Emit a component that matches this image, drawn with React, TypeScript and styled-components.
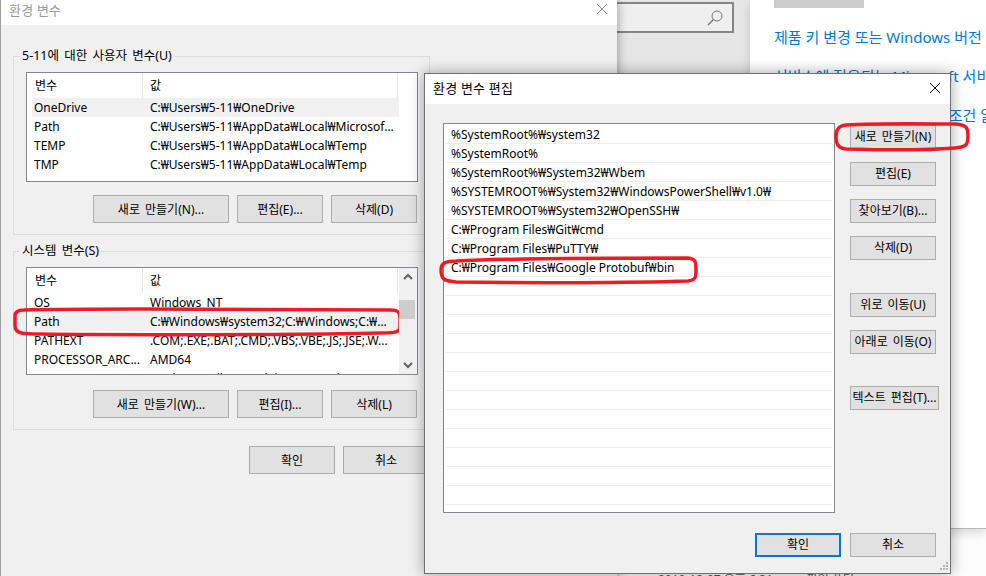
import styled, { createGlobalStyle } from "styled-components";

const GlobalStyle = createGlobalStyle`
  html, body {
    margin: 0;
    background: #fff;
    overflow: hidden;
  }
  * { box-sizing: border-box; }
`;

const fontStack = `"Noto Sans", "Noto Sans CJK KR", sans-serif`;

const Desktop = styled.div`
  position: relative;
  width: 986px;
  height: 576px;
  overflow: hidden;
  font-family: ${fontStack};
  font-size: 12px;
  color: #000;
  background: #fdfdfd;
`;

const SearchPane = styled.div`
  position: absolute;
  left: 560px;
  top: 0;
  width: 190px;
  height: 529px;
  background: #e6e6e6;
  padding-top: 2px;
`;

const SearchBox = styled.div`
  display: flex;
  align-items: center;
  justify-content: flex-end;
  width: 174px;
  height: 31px;
  padding-right: 8px;
  background: #efefef;
  border: 2px solid #858585;
`;

const SettingsPage = styled.div`
  position: absolute;
  left: 750px;
  top: 0;
  width: 236px;
  height: 529px;
  padding-left: 24px;
  background: #fff;
  border-bottom: 1px solid #b8b8b8;
  box-shadow: 0 4px 10px rgba(0, 0, 0, 0.14);
`;

const PagePlaceholder = styled.div`
  width: 90px;
  height: 8px;
  background: #cccccc;
`;

const PageLink = styled.div`
  margin-top: 19px;
  white-space: nowrap;
  font-size: 15px;
  line-height: 20px;
  color: #0078d7;
  & + & { margin-top: 19px; }
`;

const ExplorerRow = styled.div`
  position: absolute;
  left: 658px;
  top: 572px;
  display: flex;
  gap: 34px;
  font-size: 12px;
  line-height: 16px;
  color: #555;
  white-space: nowrap;
`;

const BackWindow = styled.div`
  position: absolute;
  left: 0;
  top: 0;
  width: 617px;
  height: 590px;
  display: flex;
  flex-direction: column;
  background: #f0f0f0;
  border-left: 1px solid #a0a0a0;
  box-shadow: 0 0 10px rgba(0, 0, 0, 0.4);
`;

const FrontWindow = styled.div`
  position: absolute;
  left: 424px;
  top: 73px;
  width: 527px;
  height: 501px;
  display: flex;
  flex-direction: column;
  background: #f0f0f0;
  border: 1px solid #707070;
  box-shadow: 0 0 14px rgba(0, 0, 0, 0.35);
`;

const TitleBar = styled.div<{ $height: number; $inactive?: boolean }>`
  flex: none;
  display: flex;
  align-items: center;
  justify-content: space-between;
  height: ${(p) => p.$height}px;
  padding: 0 9px ${(p) => (p.$inactive ? 7 : 2)}px 8px;
  background: #fff;
  font-size: 13px;
  letter-spacing: 0.2px;
  color: ${(p) => (p.$inactive ? "#9a9a9a" : "#000")};
`;

const TitleText = styled.span`
  padding-bottom: 2px;
`;

const BackContent = styled.div`
  width: 417px;
  margin-left: 12px;
  padding-top: 23px;
`;

const Group = styled.fieldset`
  margin: 0 0 8px;
  padding: 8px 11px 11px 12px;
  border: 1px solid #dcdcdc;
  min-width: 0;
`;

const GroupTitle = styled.legend`
  padding: 0 2px;
  margin-left: -6px;
  line-height: 16px;
  height: 16px;
  font-size: 12.5px;
  word-spacing: 2px;
`;

const VarList = styled.div<{ $height: number }>`
  position: relative;
  height: ${(p) => p.$height}px;
  padding: 0 0 0 5px;
  background: #fff;
  border: 1px solid #828790;
  overflow: hidden;
`;

const VarHeader = styled.div`
  position: relative;
  z-index: 1;
  display: flex;
  width: 366px;
  height: 25px;
  background: #fff;
`;

const HeaderCell = styled.div<{ $width: number; $inset: number }>`
  width: ${(p) => p.$width}px;
  padding-left: ${(p) => p.$inset}px;
  line-height: 26px;
  border-right: 1px solid #e5e5e5;
`;

const VarRow = styled.div<{ $selected?: boolean }>`
  display: flex;
  width: 367px;
  height: 19px;
  padding-left: 2px;
  line-height: 20px;
  white-space: nowrap;
  background: ${(p) => (p.$selected ? "#f0f0f0" : "#fff")};
`;

const VarName = styled.div`
  flex: none;
  width: 116px;
  overflow: hidden;
`;

const ButtonRow = styled.div<{ $top: number }>`
  display: flex;
  justify-content: flex-end;
  gap: 8px;
  margin: ${(p) => p.$top}px 1px 0 0;
`;

const Button = styled.button<{ $width?: number; $tall?: boolean; $default?: boolean }>`
  flex: none;
  width: ${(p) => p.$width ?? 86}px;
  height: ${(p) => (p.$tall ? 28 : 24)}px;
  padding: 0 0 ${(p) => (p.$tall ? 0 : 2)}px;
  background: #e1e1e1;
  border: ${(p) => (p.$default ? "2px solid #0078d7" : "1px solid #adadad")};
  border-radius: 0;
  font-family: ${fontStack};
  font-size: 12px;
  word-spacing: 2px;
  color: #000;
  white-space: nowrap;
`;

const BackFooter = styled.div`
  display: flex;
  gap: 8px;
  margin: 16px 0 0 236px;
`;

const Scrollbar = styled.div`
  position: absolute;
  right: 1px;
  top: 0;
  bottom: 0;
  width: 17px;
  display: flex;
  flex-direction: column;
  justify-content: space-between;
  align-items: center;
  padding: 5px 0;
  background: #f0f0f0;
  z-index: 2;
`;

const ScrollThumb = styled.div`
  position: absolute;
  left: 0;
  top: 32px;
  width: 16px;
  height: 19px;
  background: #cdcdcd;
`;

const FrontBody = styled.div`
  flex: 1;
  display: flex;
  flex-direction: column;
  padding: 19px 14px 0 18px;
`;

const EditArea = styled.div`
  display: flex;
  gap: 15px;
`;

const PathList = styled.div`
  flex: none;
  width: 392px;
  height: 390px;
  padding: 1px 1px 0 1px;
  background: #fff;
  border: 1px solid #828790;
  overflow: hidden;
`;

const PathRow = styled.div`
  height: 19px;
  margin-right: 1px;
  padding-left: 6px;
  line-height: 19px;
  border-bottom: 1px solid #eeeeee;
  white-space: nowrap;
`;

const SideButtons = styled.div`
  display: flex;
  flex-direction: column;
  padding-top: 2px;
`;

const SideGroup = styled.div<{ $gap: number }>`
  display: flex;
  flex-direction: column;
  gap: 13px;
  margin-bottom: ${(p) => p.$gap}px;
`;

const FrontFooter = styled.div`
  display: flex;
  justify-content: flex-end;
  gap: 9px;
  margin-top: 20px;
`;

const ResizeGrip = styled.svg`
  position: absolute;
  right: 0;
  bottom: 0;
`;

const Annotations = styled.svg`
  position: absolute;
  left: 0;
  top: 0;
  pointer-events: none;
`;

const CloseIcon = ({ color }: { color: string }) => (
  <svg width="12" height="12" viewBox="0 0 12 12">
    <path d="M1 1 L11 11 M11 1 L1 11" stroke={color} strokeWidth="1" fill="none" />
  </svg>
);

const Chevron = ({ down }: { down?: boolean }) => (
  <svg width="10" height="7" viewBox="0 0 10 7">
    <path d={down ? "M1 1 L5 5 L9 1" : "M1 6 L5 2 L9 6"} stroke="#606060" strokeWidth="2" fill="none" />
  </svg>
);

const userVars = [
  ["OneDrive", "C:₩Users₩5-11₩OneDrive"],
  ["Path", "C:₩Users₩5-11₩AppData₩Local₩Microsof..."],
  ["TEMP", "C:₩Users₩5-11₩AppData₩Local₩Temp"],
  ["TMP", "C:₩Users₩5-11₩AppData₩Local₩Temp"],
];

const systemVars = [
  ["OS", "Windows_NT"],
  ["Path", "C:₩Windows₩system32;C:₩Windows;C:₩..."],
  ["PATHEXT", ".COM;.EXE;.BAT;.CMD;.VBS;.VBE;.JS;.JSE;.W..."],
  ["PROCESSOR_ARC...", "AMD64"],
  ["PROCESSOR_IDE...", "Intel64 Family 6 Model 158 Stepping 9"],
];

const paths = [
  "%SystemRoot%₩system32",
  "%SystemRoot%",
  "%SystemRoot%₩System32₩Wbem",
  "%SYSTEMROOT%₩System32₩WindowsPowerShell₩v1.0₩",
  "%SYSTEMROOT%₩System32₩OpenSSH₩",
  "C:₩Program Files₩Git₩cmd",
  "C:₩Program Files₩PuTTY₩",
  "C:₩Program Files₩Google Protobuf₩bin",
  ...Array(12).fill(""),
];

const VarTable = ({ rows, height, selected, scroll }: { rows: string[][]; height: number; selected: string; scroll?: boolean }) => (
  <VarList $height={height}>
    <VarHeader>
      <HeaderCell $width={111} $inset={3}>변수</HeaderCell>
      <HeaderCell $width={255} $inset={7}>값</HeaderCell>
    </VarHeader>
    {rows.map(([name, value]) => (
      <VarRow key={name} $selected={name === selected}>
        <VarName>{name}</VarName>
        {value}
      </VarRow>
    ))}
    {scroll && (
      <Scrollbar>
        <Chevron />
        <ScrollThumb />
        <Chevron down />
      </Scrollbar>
    )}
  </VarList>
);

export default function App() {
  return (
    <Desktop>
      <GlobalStyle />
      <ExplorerRow>
        <span>2019-12-07 오후 6:21</span>
        <span>파일 폴더</span>
      </ExplorerRow>
      <SearchPane>
        <SearchBox>
          <svg width="18" height="18" viewBox="0 0 18 18">
            <circle cx="11" cy="7" r="5" stroke="#777" strokeWidth="1" fill="none" />
            <path d="M7.5 10.5 L2 16" stroke="#777" strokeWidth="1.4" fill="none" />
          </svg>
        </SearchBox>
      </SearchPane>
      <SettingsPage>
        <PagePlaceholder />
        <PageLink>제품 키 변경 또는 Windows 버전 업그레이드</PageLink>
        <PageLink>서비스에 적용되는 Microsoft 서비스 계약 읽기</PageLink>
        <PageLink>Microsoft 소프트웨어 사용 조건 읽기</PageLink>
      </SettingsPage>

      <BackWindow>
        <TitleBar $height={25} $inactive>
          환경 변수
          <CloseIcon color="#8a8a8a" />
        </TitleBar>
        <BackContent>
          <Group>
            <GroupTitle>5-11에 대한 사용자 변수(U)</GroupTitle>
            <VarTable rows={userVars} height={110} selected="OneDrive" />
            <ButtonRow $top={13}>
              <Button $tall $width={136}>새로 만들기(N)...</Button>
              <Button $tall>편집(E)...</Button>
              <Button $tall>삭제(D)</Button>
            </ButtonRow>
          </Group>
          <Group>
            <GroupTitle>시스템 변수(S)</GroupTitle>
            <VarTable rows={systemVars} height={108} selected="Path" scroll />
            <ButtonRow $top={15}>
              <Button $tall $width={136}>새로 만들기(W)...</Button>
              <Button $tall>편집(I)...</Button>
              <Button $tall>삭제(L)</Button>
            </ButtonRow>
          </Group>
          <BackFooter>
            <Button $tall>확인</Button>
            <Button $tall>취소</Button>
          </BackFooter>
        </BackContent>
      </BackWindow>

      <FrontWindow>
        <TitleBar $height={30}>
          <TitleText>환경 변수 편집</TitleText>
          <CloseIcon color="#000" />
        </TitleBar>
        <FrontBody>
          <EditArea>
            <PathList>
              {paths.map((path, i) => (
                <PathRow key={i}>{path}</PathRow>
              ))}
            </PathList>
            <SideButtons>
              <SideGroup $gap={33}>
                <Button>새로 만들기(N)</Button>
                <Button>편집(E)</Button>
                <Button>찾아보기(B)...</Button>
                <Button>삭제(D)</Button>
              </SideGroup>
              <SideGroup $gap={32}>
                <Button>위로 이동(U)</Button>
                <Button>아래로 이동(O)</Button>
              </SideGroup>
              <Button $width={89}>텍스트 편집(T)...</Button>
            </SideButtons>
          </EditArea>
          <FrontFooter>
            <Button $default>확인</Button>
            <Button>취소</Button>
          </FrontFooter>
        </FrontBody>
        <ResizeGrip width="12" height="12" viewBox="0 0 12 12" fill="#b4b4b4">
          <rect x="8" y="1" width="2" height="2" />
          <rect x="5" y="4" width="2" height="2" />
          <rect x="8" y="4" width="2" height="2" />
          <rect x="2" y="7" width="2" height="2" />
          <rect x="5" y="7" width="2" height="2" />
          <rect x="8" y="7" width="2" height="2" />
        </ResizeGrip>
      </FrontWindow>

      <Annotations width="986" height="576" viewBox="0 0 986 576" fill="none" stroke="#ed1c24" strokeWidth="3.5" strokeLinejoin="round">
        <path d="M24 310 C60 309 100 309 140 309 L390 310 C398 310 400 312 400 318 L400 327 C400 332 396 333 380 333 C300 335 120 335 40 334 C24 334 15 334 15 326 L15 316 C15 312 18 310 24 310 Z" />
        <path d="M456 261 C520 258 640 258 688 258 C696 259 696 262 696 270 C696 277 696 280 688 281 C630 283 520 283 456 282 C444 281 441 279 441 270 C441 263 446 261 456 261 Z" />
        <path d="M846 125 C880 123 935 124 956 124 C966 125 968 127 968 136 C968 145 966 147 955 148 C930 150 880 150 846 149 C838 148 836 144 836 136 C836 130 838 126 846 125 Z" />
      </Annotations>
    </Desktop>
  );
}
